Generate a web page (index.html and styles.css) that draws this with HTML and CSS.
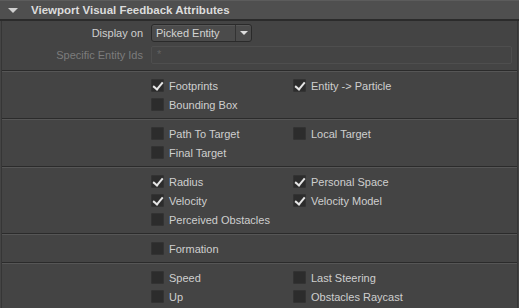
FILE: index.html
```html
<!DOCTYPE html>
<html lang="en">
<head>
    <meta charset="UTF-8">
    <title>Viewport Visual Feedback Attributes</title>
    <link rel="stylesheet" href="styles.css">
</head>
<body>
    <div class="header">
        <span class="arrow"></span>
        <span class="title">Viewport Visual Feedback Attributes</span>
    </div>

    <div class="frame">
        <div class="section fields">
            <div class="field-row">
                <label class="field-label">Display on</label>
                <div class="dropdown">
                    <span class="dropdown-text">Picked Entity</span>
                    <span class="dropdown-btn"><span class="caret"></span></span>
                </div>
            </div>
            <div class="field-row">
                <label class="field-label dim">Specific Entity Ids</label>
                <div class="textbox">*</div>
            </div>
        </div>

        <div class="section">
            <div class="checks">
                <div class="check on"><span class="box"></span>Footprints</div>
                <div class="check on"><span class="box"></span>Entity -&gt; Particle</div>
                <div class="check"><span class="box"></span>Bounding Box</div>
            </div>
        </div>

        <div class="section">
            <div class="checks">
                <div class="check"><span class="box"></span>Path To Target</div>
                <div class="check"><span class="box"></span>Local Target</div>
                <div class="check"><span class="box"></span>Final Target</div>
            </div>
        </div>

        <div class="section">
            <div class="checks">
                <div class="check on"><span class="box"></span>Radius</div>
                <div class="check on"><span class="box"></span>Personal Space</div>
                <div class="check on"><span class="box"></span>Velocity</div>
                <div class="check on"><span class="box"></span>Velocity Model</div>
                <div class="check"><span class="box"></span>Perceived Obstacles</div>
            </div>
        </div>

        <div class="section">
            <div class="checks">
                <div class="check"><span class="box"></span>Formation</div>
            </div>
        </div>

        <div class="section">
            <div class="checks">
                <div class="check"><span class="box"></span>Speed</div>
                <div class="check"><span class="box"></span>Last Steering</div>
                <div class="check"><span class="box"></span>Up</div>
                <div class="check"><span class="box"></span>Obstacles Raycast</div>
            </div>
        </div>
    </div>
</body>
</html>
```

FILE: styles.css
```css
:root {
    --panel: #444444;
    --header: #4f4f4f;
    --dark-line: #2b2b2b;
    --light-line: #565656;
    --text: #cfcfcf;
    --dim: #7c7c7c;
}

html, body {
    margin: 0;
    height: 100%;
}

body {
    background: var(--panel);
    font-family: 'Liberation Sans', Arial, sans-serif;
    font-size: 11px;
    color: var(--text);
    overflow: hidden;
}

.header {
    height: 18px;
    background: var(--header);
    border-top: 1px solid #5c5c5c;
    border-bottom: 2px solid var(--dark-line);
    display: flex;
    align-items: center;
}

.arrow {
    width: 0;
    height: 0;
    margin-left: 8px;
    border-left: 5px solid transparent;
    border-right: 5px solid transparent;
    border-top: 5px solid #d0d0d0;
}

.title {
    margin-left: 13px;
    font-weight: bold;
    color: #dcdcdc;
    font-size: 11.5px;
}

.frame {
    margin: 0 1px;
    border-left: 1px solid #363636;
    border-right: 1px solid #363636;
    border-bottom: 1px solid var(--dark-line);
    background: var(--panel);
}

.section {
    padding: 4px 0;
    border-bottom: 1px solid var(--dark-line);
    box-shadow: 0 1px 0 var(--light-line);
    margin-bottom: 1px;
}

.section:last-child {
    border-bottom: none;
    box-shadow: none;
    margin-bottom: 0;
}

.fields {
    padding: 3px 0 6px;
    display: flex;
    flex-direction: column;
    gap: 4px;
}

.field-row {
    display: flex;
    align-items: center;
    height: 18px;
}

.field-label {
    width: 141px;
    text-align: right;
    padding-right: 8px;
}

.field-label.dim {
    color: var(--dim);
}

.dropdown {
    width: 99px;
    height: 16px;
    display: flex;
    align-items: center;
    background: #4b4b4b;
    border: 1px solid #2a2a2a;
    border-radius: 3px;
    box-shadow: inset 0 1px 0 #575757;
}

.dropdown-text {
    flex: 1;
    padding-left: 4px;
    color: #d4d4d4;
}

.dropdown-btn {
    width: 15px;
    height: 100%;
    border-left: 1px solid #333;
    display: flex;
    align-items: center;
    justify-content: center;
}

.caret {
    width: 0;
    height: 0;
    border-left: 4px solid transparent;
    border-right: 4px solid transparent;
    border-top: 4px solid #dddddd;
}

.textbox {
    width: 354px;
    height: 16px;
    border: 1px solid #4e4e4e;
    border-radius: 2px;
    padding-left: 5px;
    color: #626262;
    line-height: 14px;
}

.checks {
    display: grid;
    grid-template-columns: 142px 200px;
    grid-auto-rows: 19px;
    padding-left: 149px;
}

.check {
    display: flex;
    align-items: center;
    gap: 5px;
    color: var(--text);
}

.box {
    position: relative;
    width: 13px;
    height: 13px;
    background: #2c2c2c;
    border-radius: 2px;
    box-shadow: inset 0 0 0 1px #333;
}

.check.on .box::after {
    content: "";
    position: absolute;
    left: 4px;
    top: 1px;
    width: 4px;
    height: 8px;
    border-right: 2px solid #e6e6e6;
    border-bottom: 2px solid #e6e6e6;
    transform: rotate(40deg);
}
```
